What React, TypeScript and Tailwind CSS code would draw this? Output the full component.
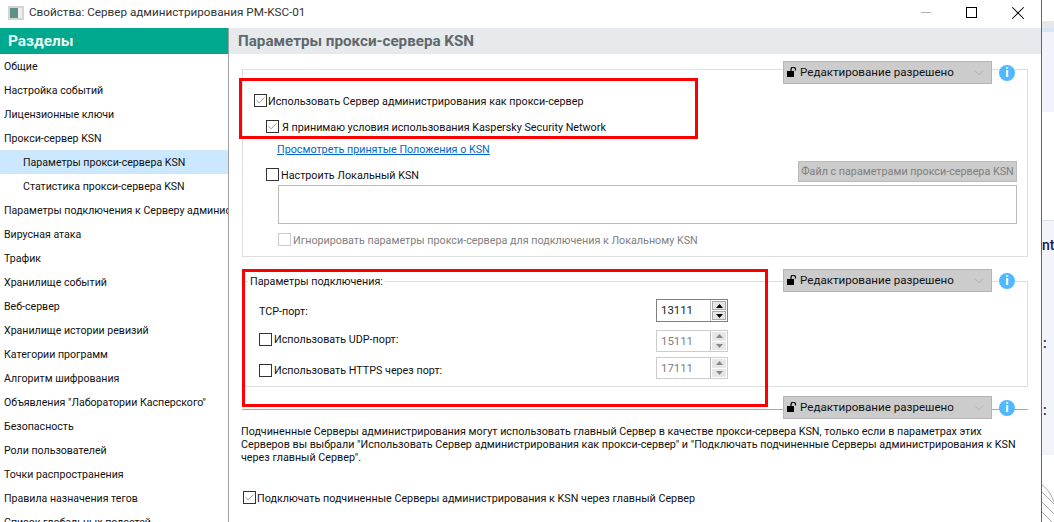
import { ReactNode } from "react";
import { Check, ChevronDown, X } from "lucide-react";

const sections = [
  { label: "Общие" },
  { label: "Настройка событий" },
  { label: "Лицензионные ключи" },
  { label: "Прокси-сервер KSN" },
  { label: "Параметры прокси-сервера KSN", sub: true, active: true },
  { label: "Статистика прокси-сервера KSN", sub: true },
  { label: "Параметры подключения к Серверу администрирования" },
  { label: "Вирусная атака" },
  { label: "Трафик" },
  { label: "Хранилище событий" },
  { label: "Веб-сервер" },
  { label: "Хранилище истории ревизий" },
  { label: "Категории программ" },
  { label: "Алгоритм шифрования" },
  { label: 'Объявления "Лаборатории Касперского"' },
  { label: "Безопасность" },
  { label: "Роли пользователей" },
  { label: "Точки распространения" },
  { label: "Правила назначения тегов" },
  { label: "Список глобальных подсетей" },
];

const Checkbox = ({ checked, disabled }: { checked?: boolean; disabled?: boolean }) => (
  <span
    className={`flex h-[13px] w-[13px] shrink-0 items-center justify-center border bg-white ${
      disabled ? "border-[#cccccc]" : "border-[#333333]"
    }`}
  >
    {checked && <Check size={11} strokeWidth={1.6} className="text-[#707070]" />}
  </span>
);

const LockBadge = () => (
  <div className="flex h-[23px] w-[209px] items-center border border-[#b5b5b5] bg-[#cccccc] pl-[3px] pr-[5px] text-[#111111]">
    <svg width="10" height="11" viewBox="0 0 10 11" className="mr-[3px] shrink-0" fill="none">
      <rect x="0" y="4" width="7" height="6" fill="#000" />
      <path d="M4 4V2.5a2.2 2.2 0 0 1 4.5 0V3.5" stroke="#000" strokeWidth="1.2" />
    </svg>
    <span className="flex-1 text-[11.6px]">Редактирование разрешено</span>
    <ChevronDown size={14} strokeWidth={1} className="text-[#a0a0a0]" />
  </div>
);

const InfoDot = () => (
  <span className="flex h-4 w-4 items-center justify-center rounded-full bg-[#4fb8ff] text-[13px] font-bold leading-none text-white">
    i
  </span>
);

const Lockbar = ({ className }: { className: string }) => (
  <div className={`absolute flex items-center gap-[7px] ${className}`}>
    <LockBadge />
    <InfoDot />
  </div>
);

const SpinButton = ({ up, active }: { up?: boolean; active?: boolean }) => (
  <span
    className={`flex flex-1 items-center justify-center ${
      active ? "border border-[#aaaaaa] bg-[#e6e6e6] text-black" : "bg-[#e6e6e6] text-[#888888]"
    }`}
  >
    <svg width="7" height="4" viewBox="0 0 7 4" fill="currentColor">
      <path d={up ? "M3.5 0L7 4H0z" : "M0 0h7L3.5 4z"} />
    </svg>
  </span>
);

const Spinner = ({ value, active }: { value: string; active?: boolean }) => (
  <div
    className={`flex w-[72px] ${
      active ? "h-[23px] border border-[#808080] text-[#222222]" : "h-[22px] border border-[#cccccc] text-[#808080]"
    }`}
  >
    <span className="flex flex-1 items-center pl-[4px] text-[11.4px]">{value}</span>
    <div className="flex w-[17px] flex-col gap-px border-l border-[#bbbbbb] bg-white p-px">
      <SpinButton up active={active} />
      <SpinButton active={active} />
    </div>
  </div>
);

const Row = ({ className, children }: { className?: string; children: ReactNode }) => (
  <div className={`flex items-center ${className ?? ""}`}>{children}</div>
);

// 13px tall box with a taller line, sits the text 1px lower next to a checkbox
const Label = ({ children }: { children: ReactNode }) => (
  <span className="block h-[13px] whitespace-nowrap leading-[15px]">{children}</span>
);

const App = () => {
  return (
    <div className="relative flex h-[522px] w-[1054px] overflow-hidden bg-white font-['Roboto','Liberation_Sans',sans-serif] text-[10.75px] leading-[13px] text-[#111111]">
      <div className="flex w-[1041px] shrink-0 flex-col">
        {/* title bar */}
        <div className="flex h-[28px] shrink-0 items-center pb-[3px]">
          <svg width="16" height="14" viewBox="0 0 16 14" className="ml-[8px] mr-[5px]">
            <rect x="0" y="0" width="16" height="14" fill="#d4d4d4" />
            <rect x="2" y="2" width="8" height="10" fill="#5f8f8a" />
            <rect x="10" y="2" width="4" height="10" fill="#eeeeee" />
          </svg>
          <span className="text-[11.7px] text-[#333333]">Свойства: Сервер администрирования PM-KSC-01</span>
          <div className="ml-auto flex items-center">
            <span className="mr-[35px] h-px w-[10px] bg-[#b0b0b0]" />
            <span className="mr-[30px] h-[11px] w-[11px] border border-black" />
            <X size={22} strokeWidth={1.1} className="mr-[12px] text-black" />
          </div>
        </div>

        <div className="flex min-h-0 flex-1">
          {/* sections list */}
          <div className="flex w-[229px] shrink-0 flex-col overflow-hidden border-r border-[#a0a0a0]">
            <div className="flex h-[26px] shrink-0 items-center bg-[#00a88e] pl-2 text-[15.4px] font-bold text-[#e8f8f4]">
              Разделы
            </div>
            {sections.map((s) => (
              <div
                key={s.label}
                className={`flex h-[24px] shrink-0 items-center whitespace-nowrap text-[10.6px] ${s.sub ? "pl-[23px]" : "pl-1"} ${
                  s.active ? "bg-[#cce8ff]" : ""
                }`}
              >
                {s.label}
              </div>
            ))}
          </div>

          {/* main panel */}
          <div className="relative flex min-w-0 flex-1 flex-col">
            <div className="flex h-[26px] shrink-0 items-center bg-[#e6eaec] pl-[9px] text-[15.2px] font-bold text-[#60686c]">
              Параметры прокси-сервера KSN
            </div>

            <div className="flex flex-col pl-[13px] pr-[13px]">
              {/* KSN proxy group */}
              <div className="relative mt-[15px] h-[188px] border border-[#dddddd] pl-[11px]">
                <Lockbar className="right-[12px] top-[-9px]" />
                <Row className="mt-[24px] gap-px">
                  <Checkbox checked />
                  <Label>Использовать Сервер администрирования как прокси-сервер</Label>
                </Row>
                <Row className="ml-[12px] mt-[13px] gap-[3px]">
                  <Checkbox checked />
                  <Label>Я принимаю условия использования Kaspersky Security Network</Label>
                </Row>
                <a className="ml-[23px] mt-[9px] block h-[13px] w-fit leading-[15px] text-[#0066cc] underline">
                  Просмотреть принятые Положения о KSN
                </a>
                <Row className="ml-[12px] mt-[13px] h-[13px] gap-[2px]">
                  <Checkbox />
                  <Label>Настроить Локальный KSN</Label>
                  <span className="ml-auto mr-[10px] mt-[-6px] flex h-[21px] w-[219px] shrink-0 items-center justify-center whitespace-nowrap border border-[#bbbbbb] bg-[#cccccc] text-[#808080]">
                    Файл с параметрами прокси-сервера KSN
                  </span>
                </Row>
                <div className="ml-[24px] mr-[10px] mt-[4px] h-[39px] border border-[#bbbbbb]" />
                <Row className="ml-[24px] mt-[9px] gap-[2px] text-[#808080]">
                  <Checkbox disabled />
                  <Label>Игнорировать параметры прокси-сервера для подключения к Локальному KSN</Label>
                </Row>
              </div>

              {/* connection group */}
              <div className="relative mt-[24px] h-[106px] border border-[#dddddd]">
                <Lockbar className="right-[12px] top-[-13px]" />
                <span className="absolute left-[5px] top-[-7px] bg-white px-[2px]">Параметры подключения:</span>
                <Row className="ml-[16px] mr-[299px] mt-[17px] justify-between">
                  <span className="mt-[2px]">TCP-порт:</span>
                  <Spinner value="13111" active />
                </Row>
                <Row className="ml-[16px] mr-[299px] mt-[8px] justify-between">
                  <span className="mt-[-4px] flex items-center gap-[2px]">
                    <Checkbox />
                    Использовать UDP-порт:
                  </span>
                  <Spinner value="15111" />
                </Row>
                <Row className="ml-[16px] mr-[299px] mt-[5px] justify-between">
                  <span className="mt-[4px] flex items-center gap-[2px]">
                    <Checkbox />
                    Использовать HTTPS через порт:
                  </span>
                  <Spinner value="17111" />
                </Row>
              </div>

              {/* subordinate servers group */}
              <div className="relative mt-[22px] border-t border-[#a8a8a8]">
                <Lockbar className="right-[13px] top-[-14px]" />
                <p className="ml-[-1px] mt-[15px] w-[785px] leading-[13px]">
                  Подчиненные Серверы администрирования могут использовать главный Сервер в качестве прокси-сервера KSN, только если в параметрах этих Серверов вы выбрали "Использовать Сервер администрирования как прокси-сервер" и "Подключать подчиненные Серверы администрирования к KSN через главный Сервер".
                </p>
                <Row className="ml-[1px] mt-[27px] gap-px">
                  <Checkbox checked />
                  <Label>Подключать подчиненные Серверы администрирования к KSN через главный Сервер</Label>
                </Row>
              </div>
            </div>
          </div>
        </div>
      </div>

      {/* window behind */}
      <div className="flex min-w-0 flex-1 flex-col overflow-hidden border-l border-[#666666] bg-white text-[#1a1a50]">
        <div className="mt-[21px] h-[7px] shrink-0 bg-[#e8e8e8]" />
        <div className="h-[4px] shrink-0 bg-[#d6e6f6]" />
        <div className="h-[80px] shrink-0 bg-[#f2f2fa]" />
        <div className="mt-[108px] h-px shrink-0 bg-[#dde2e6]" />
        <div className="flex h-[234px] shrink-0 flex-col bg-[#f3f3fa] text-[14px] font-medium">
          <span className="mt-[18px] whitespace-nowrap">nt</span>
          <span className="ml-[1px] mt-[85px]">:</span>
          <span className="ml-[1px] mt-[54px]">:</span>
        </div>
        <svg width="12" height="42" viewBox="0 0 12 42" className="mt-[25px] shrink-0" fill="none" stroke="#a8a8a8">
          <path d="M0 5C5 8 9 14 12 22M0 12L12 24M0 22L12 34M0 32L12 44" />
        </svg>
      </div>

      {/* red annotation frames */}
      <div className="absolute left-[239px] top-[78px] h-[61px] w-[459px] border-[3px] border-[#ff0000]" />
      <div className="absolute left-[242px] top-[269px] h-[138px] w-[526px] border-[3px] border-[#ff0000]" />
    </div>
  );
};

export default App;
